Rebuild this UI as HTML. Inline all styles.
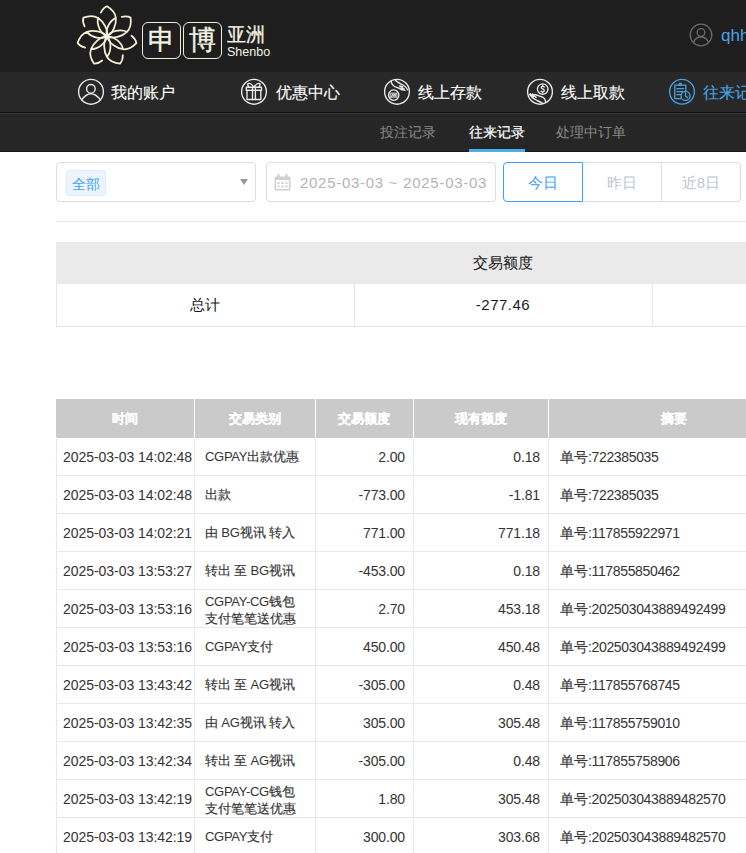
<!DOCTYPE html><html><head><meta charset="utf-8"><style>
*{margin:0;padding:0;box-sizing:border-box}
html,body{width:746px;height:853px;overflow:hidden;background:#fff;font-family:"Liberation Sans",sans-serif}
.abs{position:absolute}
b.c{font-weight:normal;letter-spacing:0;-webkit-text-stroke:0.15px currentColor}
.nv{position:absolute;top:72px;height:40px;line-height:42px;color:#fff;font-size:16px;white-space:nowrap;-webkit-text-stroke:0.1px currentColor}
.sb{position:absolute;top:113px;height:39px;line-height:38px;font-size:14px;color:#8a8a8a;white-space:nowrap}
.box{position:absolute;border:1px solid #dcdcdc;border-radius:4px;background:#fff}
.btn{position:absolute;top:162px;height:40px;border:1px solid #dcdcdc;line-height:39px;text-align:center;font-size:15px;color:#c0c4cc}
.cell{position:absolute;white-space:nowrap;font-size:14px;color:#333;line-height:20px}
.hd{position:absolute;top:399px;height:38px;line-height:40px;color:#fff;font-size:13px;font-weight:bold;text-align:center;-webkit-text-stroke:0.2px #fff}
</style></head><body>
<div class="abs" style="left:0;top:0;width:746px;height:72px;background:#1e1e1e"></div>
<div class="abs" style="left:0;top:72px;width:746px;height:40px;background:#282828"></div>
<div class="abs" style="left:0;top:112px;width:746px;height:1px;background:#121212"></div>
<div class="abs" style="left:0;top:113px;width:746px;height:1px;background:#333"></div>
<div class="abs" style="left:0;top:114px;width:746px;height:37px;background:#262626"></div>
<div class="abs" style="left:0;top:151px;width:746px;height:1px;background:#191919"></div>
<svg class="abs" style="left:70px;top:0" width="75" height="72" viewBox="-37 -36.4 75 72"><g fill="none" stroke="#f2f0d2" stroke-width="1.75" stroke-linecap="round" stroke-linejoin="round"><g transform="rotate(-15.70)"><path d="M0,0 C5,4.5 15,4 20.5,1 C24,-1 27,-6 27.8,-11.7 C26,-13.5 23,-14.8 19.5,-14.9 M0,0 C5,-4.2 15,-4 20.5,1"/></g><g transform="rotate(-67.13)"><path d="M0,0 C5,4.5 15,4 20.5,1 C24,-1 27,-6 27.8,-11.7 C26,-13.5 23,-14.8 19.5,-14.9 M0,0 C5,-4.2 15,-4 20.5,1"/></g><g transform="rotate(-118.56)"><path d="M0,0 C5,4.5 15,4 20.5,1 C24,-1 27,-6 27.8,-11.7 C26,-13.5 23,-14.8 19.5,-14.9 M0,0 C5,-4.2 15,-4 20.5,1"/></g><g transform="rotate(-169.99)"><path d="M0,0 C5,4.5 15,4 20.5,1 C24,-1 27,-6 27.8,-11.7 C26,-13.5 23,-14.8 19.5,-14.9 M0,0 C5,-4.2 15,-4 20.5,1"/></g><g transform="rotate(-221.41)"><path d="M0,0 C5,4.5 15,4 20.5,1 C24,-1 27,-6 27.8,-11.7 C26,-13.5 23,-14.8 19.5,-14.9 M0,0 C5,-4.2 15,-4 20.5,1"/></g><g transform="rotate(-272.84)"><path d="M0,0 C5,4.5 15,4 20.5,1 C24,-1 27,-6 27.8,-11.7 C26,-13.5 23,-14.8 19.5,-14.9 M0,0 C5,-4.2 15,-4 20.5,1"/></g><g transform="rotate(-324.27)"><path d="M0,0 C5,4.5 15,4 20.5,1 C24,-1 27,-6 27.8,-11.7 C26,-13.5 23,-14.8 19.5,-14.9 M0,0 C5,-4.2 15,-4 20.5,1"/></g></g><circle cx="0" cy="0" r="2.3" fill="#efefec"/></svg>
<div class="abs" style="left:142px;top:22px;width:39px;height:37px;border:1.5px solid #eeecd6;border-radius:6px;color:#f4f2e2;font-size:26.5px;line-height:35px;text-align:center;-webkit-text-stroke:0.4px #f4f2e2">申</div>
<div class="abs" style="left:183px;top:22px;width:39px;height:37px;border:1.5px solid #eeecd6;border-radius:6px;color:#f4f2e2;font-size:26.5px;line-height:35px;text-align:center;-webkit-text-stroke:0.4px #f4f2e2">博</div>
<div class="abs" style="left:227px;top:25px;font-size:19px;line-height:20px;color:#f4f2e2;-webkit-text-stroke:0.3px #f4f2e2">亚洲</div>
<div class="abs" style="left:227px;top:45px;font-size:12.5px;line-height:15px;color:#f4f2e2">Shenbo</div>
<svg class="abs" style="left:689px;top:23px" width="24" height="24" viewBox="0 0 24 24"><g fill="none" stroke="#6a6a6a" stroke-width="1.3"><circle cx="12" cy="12" r="10.8"/><circle cx="12" cy="9.5" r="3.8"/><path d="M4.5 19.5 C6 15.5 9 14 12 14 C15 14 18 15.5 19.5 19.5"/></g></svg>
<div class="abs" style="left:721px;top:24px;font-size:17px;line-height:24px;color:#4aa3e0">qhh</div>
<svg class="abs" style="left:76px;top:77px" width="30" height="30" viewBox="0 0 30 30"><g fill="none" stroke="#ececec" stroke-width="1.35" stroke-linecap="round" stroke-linejoin="round"><circle cx="15" cy="14.8" r="12.4"/><circle cx="14.9" cy="11.8" r="4.3"/><path d="M5.6,22.9 Q15,10.5 24.4,22.9"/></g></svg>
<div class="nv" style="left:111px">我的账户</div>
<svg class="abs" style="left:239px;top:77px" width="30" height="30" viewBox="0 0 30 30"><g fill="none" stroke="#ececec" stroke-width="1.35" stroke-linecap="round" stroke-linejoin="round"><circle cx="15" cy="14.8" r="12.4"/><rect x="8" y="13.4" width="13.8" height="9.1"/><rect x="7.3" y="10.2" width="15.2" height="3.2"/><path d="M13.5,10.2 V22.5 M16.4,10.2 V22.5"/><path d="M14.9,10 C13,7.5 11,5.5 9.2,6.6 C8.2,7.5 9,9 10,10 M14.9,10 C16.8,7.5 18.8,5.5 20.6,6.6 C21.6,7.5 20.8,9 19.8,10"/></g></svg>
<div class="nv" style="left:276px">优惠中心</div>
<svg class="abs" style="left:382px;top:77px" width="30" height="30" viewBox="0 0 30 30"><g fill="none" stroke="#ececec" stroke-width="1.35" stroke-linecap="round" stroke-linejoin="round"><circle cx="15" cy="14.8" r="12.4"/><circle cx="11.7" cy="18.1" r="5.2"/><path stroke-width="0.9" d="M8.5,16.2 H14.9 V20.2 H8.5 Z M9.4,19.6 L10.4,16.9 L11.2,19.6 L12.2,16.9 L13.1,19.6 L14,16.9"/><path d="M9,4 C9.5,7.5 12,10 16.5,11 C18.5,11.5 19.5,12.5 20,13 M13.3,3.3 C15.5,5.5 18,6.5 21,8 C23.5,9.5 25,11.5 25.5,12.8"/><path d="M17.6,9 L20.8,9.9 M19,10.8 L22,11.8 M20.5,12.5 L23,13.3"/></g></svg>
<div class="nv" style="left:418px">线上存款</div>
<svg class="abs" style="left:525px;top:77px" width="30" height="30" viewBox="0 0 30 30"><g fill="none" stroke="#ececec" stroke-width="1.35" stroke-linecap="round" stroke-linejoin="round"><circle cx="15" cy="14.8" r="12.4"/><circle cx="17.7" cy="12.1" r="5.3"/><path d="M19.2,10 C18.8,9 16.2,9 16.2,10.6 C16.2,12.2 19.3,11.8 19.3,13.6 C19.3,15.2 16.6,15.2 16,14.2 M17.7,8.2 V9 M17.7,15.2 V16"/><path d="M4.6,17.5 C6.5,20 8.5,22 12,23.5 C14.5,24.5 16.5,25.5 17.8,26.3 M9.8,17.4 C12.5,18.5 15,19 17.5,20 C19.5,21 20.5,23 20.7,25.3 M5.3,16.7 L8.5,19.5 M7.5,17 L11.2,20.6"/></g></svg>
<div class="nv" style="left:561px">线上取款</div>
<svg class="abs" style="left:667px;top:77px" width="30" height="30" viewBox="0 0 30 30"><g fill="none" stroke="#4aa3e0" stroke-width="1.3" stroke-linecap="round" stroke-linejoin="round"><circle cx="15" cy="14.8" r="12.4"/><path d="M14,21.6 H7.8 V8.2 H18.8 V14.2"/><circle cx="13.3" cy="7.3" r="1.2"/><path d="M10,11.7 H16.6 M10,14.6 H16 M10,17.7 H13.5"/><circle cx="18.5" cy="18.9" r="4.5"/><path d="M18.5,16 V19.2 L20.5,20.6"/></g></svg>
<div class="nv" style="left:703px;color:#4aa3e0">往来记录</div>
<div class="sb" style="left:380px">投注记录</div>
<div class="sb" style="left:469px;color:#fff;-webkit-text-stroke:0.2px #fff">往来记录</div>
<div class="abs" style="left:469px;top:149px;width:56px;height:3px;background:#4aaeea"></div>
<div class="sb" style="left:556px">处理中订单</div>
<div class="box" style="left:56px;top:162px;width:200px;height:40px"></div>
<div class="abs" style="left:66px;top:170px;width:40px;height:26px;background:#ecf5ff;border:1px solid #d9ecff;border-radius:3px;color:#409eff;font-size:14px;line-height:27px;text-align:center">全部</div>
<div class="abs" style="left:240px;top:179px;width:0;height:0;border-left:4px solid transparent;border-right:4px solid transparent;border-top:6px solid #999"></div>
<div class="box" style="left:266px;top:162px;width:230px;height:40px"></div>
<svg class="abs" style="left:274px;top:174px" width="17" height="17" viewBox="0 0 17 17"><rect x="0.5" y="2.5" width="16" height="14" rx="1.5" fill="#d0d0d0"/><rect x="2" y="6" width="13" height="9" fill="#fff"/><rect x="3.5" y="0" width="2" height="4" fill="#d0d0d0"/><rect x="11.5" y="0" width="2" height="4" fill="#d0d0d0"/><g fill="#d0d0d0"><rect x="3.5" y="8" width="2" height="2"/><rect x="7.5" y="8" width="2" height="2"/><rect x="11.5" y="8" width="2" height="2"/><rect x="3.5" y="11.5" width="2" height="2"/><rect x="7.5" y="11.5" width="2" height="2"/><rect x="11.5" y="11.5" width="2" height="2"/></g></svg>
<div class="abs" style="left:300px;top:162px;line-height:41px;font-size:15px;letter-spacing:0.72px;color:#b4b4b4;white-space:nowrap">2025-03-03 ~ 2025-03-03</div>
<div class="btn" style="left:503px;width:80px;border-color:#409eff;color:#409eff;border-radius:4px 0 0 4px;z-index:2">今日</div>
<div class="btn" style="left:582px;width:80px;border-left:none">昨日</div>
<div class="btn" style="left:661px;width:80px;border-radius:0 4px 4px 0">近8日</div>
<div class="abs" style="left:56px;top:221px;width:690px;height:1px;background:#e8e8e8"></div>
<div class="abs" style="left:56px;top:242px;width:690px;height:42px;background:#eaeaea"></div>
<div class="abs" style="left:56px;top:284px;width:720px;height:43px;border:1px solid #e6e6e6;border-top:none"></div>
<div class="abs" style="left:354px;top:284px;width:1px;height:42px;background:#e6e6e6"></div>
<div class="abs" style="left:652px;top:284px;width:1px;height:42px;background:#e6e6e6"></div>
<div class="cell" style="left:354px;width:298px;top:253px;text-align:center;font-size:15px;color:#1a1a1a;-webkit-text-stroke:0.05px #1a1a1a">交易额度</div>
<div class="cell" style="left:56px;width:298px;top:295px;text-align:center;font-size:15px;color:#1a1a1a;-webkit-text-stroke:0.05px #1a1a1a">总计</div>
<div class="cell" style="left:354px;width:298px;top:295px;text-align:center;font-size:15px;letter-spacing:0.5px;color:#1a1a1a">-277.46</div>
<div class="abs" style="left:56px;top:399px;width:744px;height:39px;background:#cacaca"></div>
<div class="hd" style="left:56px;width:138px">时间</div>
<div class="abs" style="left:194px;top:399px;width:1px;height:39px;background:#fff"></div>
<div class="hd" style="left:194px;width:121px">交易类别</div>
<div class="abs" style="left:315px;top:399px;width:1px;height:39px;background:#fff"></div>
<div class="hd" style="left:315px;width:98px">交易额度</div>
<div class="abs" style="left:413px;top:399px;width:1px;height:39px;background:#fff"></div>
<div class="hd" style="left:413px;width:135px">现有额度</div>
<div class="abs" style="left:548px;top:399px;width:1px;height:39px;background:#fff"></div>
<div class="hd" style="left:548px;width:252px">摘要</div>
<div class="abs" style="left:56px;top:475px;width:744px;height:1px;background:#e8e8e8"></div>
<div class="abs" style="left:56px;top:513px;width:744px;height:1px;background:#e8e8e8"></div>
<div class="abs" style="left:56px;top:551px;width:744px;height:1px;background:#e8e8e8"></div>
<div class="abs" style="left:56px;top:589px;width:744px;height:1px;background:#e8e8e8"></div>
<div class="abs" style="left:56px;top:627px;width:744px;height:1px;background:#e8e8e8"></div>
<div class="abs" style="left:56px;top:665px;width:744px;height:1px;background:#e8e8e8"></div>
<div class="abs" style="left:56px;top:703px;width:744px;height:1px;background:#e8e8e8"></div>
<div class="abs" style="left:56px;top:741px;width:744px;height:1px;background:#e8e8e8"></div>
<div class="abs" style="left:56px;top:779px;width:744px;height:1px;background:#e8e8e8"></div>
<div class="abs" style="left:56px;top:817px;width:744px;height:1px;background:#e8e8e8"></div>
<div class="abs" style="left:56px;top:855px;width:744px;height:1px;background:#e8e8e8"></div>
<div class="abs" style="left:56px;top:437px;width:1px;height:419px;background:#e8e8e8"></div>
<div class="abs" style="left:194px;top:437px;width:1px;height:419px;background:#e8e8e8"></div>
<div class="abs" style="left:315px;top:437px;width:1px;height:419px;background:#e8e8e8"></div>
<div class="abs" style="left:413px;top:437px;width:1px;height:419px;background:#e8e8e8"></div>
<div class="abs" style="left:548px;top:437px;width:1px;height:419px;background:#e8e8e8"></div>
<div class="cell" style="left:63px;top:447px;letter-spacing:-0.05px">2025-03-03 14:02:48</div>
<div class="cell" style="left:205px;top:447px;font-size:13px;letter-spacing:-0.3px">CGPAY<b class="c" style="font-size:13px">出款优惠</b></div>
<div class="cell" style="left:315px;width:90px;top:447px;text-align:right;letter-spacing:-0.15px">2.00</div>
<div class="cell" style="left:413px;width:127px;top:447px;text-align:right;letter-spacing:-0.15px">0.18</div>
<div class="cell" style="left:560px;top:447px;letter-spacing:-0.35px"><b class="c" style="font-size:13.5px">单号</b>:722385035</div>
<div class="cell" style="left:63px;top:485px;letter-spacing:-0.05px">2025-03-03 14:02:48</div>
<div class="cell" style="left:205px;top:485px;font-size:13px;letter-spacing:-0.3px"><b class="c" style="font-size:13px">出款</b></div>
<div class="cell" style="left:315px;width:90px;top:485px;text-align:right;letter-spacing:-0.15px">-773.00</div>
<div class="cell" style="left:413px;width:127px;top:485px;text-align:right;letter-spacing:-0.15px">-1.81</div>
<div class="cell" style="left:560px;top:485px;letter-spacing:-0.35px"><b class="c" style="font-size:13.5px">单号</b>:722385035</div>
<div class="cell" style="left:63px;top:523px;letter-spacing:-0.05px">2025-03-03 14:02:21</div>
<div class="cell" style="left:205px;top:523px;font-size:13px;letter-spacing:-0.3px"><b class="c" style="font-size:13px">由</b> BG<b class="c" style="font-size:13px">视讯</b> <b class="c" style="font-size:13px">转入</b></div>
<div class="cell" style="left:315px;width:90px;top:523px;text-align:right;letter-spacing:-0.15px">771.00</div>
<div class="cell" style="left:413px;width:127px;top:523px;text-align:right;letter-spacing:-0.15px">771.18</div>
<div class="cell" style="left:560px;top:523px;letter-spacing:-0.35px"><b class="c" style="font-size:13.5px">单号</b>:117855922971</div>
<div class="cell" style="left:63px;top:561px;letter-spacing:-0.05px">2025-03-03 13:53:27</div>
<div class="cell" style="left:205px;top:561px;font-size:13px;letter-spacing:-0.3px"><b class="c" style="font-size:13px">转出</b> <b class="c" style="font-size:13px">至</b> BG<b class="c" style="font-size:13px">视讯</b></div>
<div class="cell" style="left:315px;width:90px;top:561px;text-align:right;letter-spacing:-0.15px">-453.00</div>
<div class="cell" style="left:413px;width:127px;top:561px;text-align:right;letter-spacing:-0.15px">0.18</div>
<div class="cell" style="left:560px;top:561px;letter-spacing:-0.35px"><b class="c" style="font-size:13.5px">单号</b>:117855850462</div>
<div class="cell" style="left:63px;top:599px;letter-spacing:-0.05px">2025-03-03 13:53:16</div>
<div class="cell" style="left:205px;top:592.5px;line-height:17px;font-size:13px;letter-spacing:-0.3px">CGPAY-CG<b class="c" style="font-size:13px">钱包</b><br><b class="c" style="font-size:13px">支付笔笔送优惠</b></div>
<div class="cell" style="left:315px;width:90px;top:599px;text-align:right;letter-spacing:-0.15px">2.70</div>
<div class="cell" style="left:413px;width:127px;top:599px;text-align:right;letter-spacing:-0.15px">453.18</div>
<div class="cell" style="left:560px;top:599px;letter-spacing:-0.35px"><b class="c" style="font-size:13.5px">单号</b>:202503043889492499</div>
<div class="cell" style="left:63px;top:637px;letter-spacing:-0.05px">2025-03-03 13:53:16</div>
<div class="cell" style="left:205px;top:637px;font-size:13px;letter-spacing:-0.3px">CGPAY<b class="c" style="font-size:13px">支付</b></div>
<div class="cell" style="left:315px;width:90px;top:637px;text-align:right;letter-spacing:-0.15px">450.00</div>
<div class="cell" style="left:413px;width:127px;top:637px;text-align:right;letter-spacing:-0.15px">450.48</div>
<div class="cell" style="left:560px;top:637px;letter-spacing:-0.35px"><b class="c" style="font-size:13.5px">单号</b>:202503043889492499</div>
<div class="cell" style="left:63px;top:675px;letter-spacing:-0.05px">2025-03-03 13:43:42</div>
<div class="cell" style="left:205px;top:675px;font-size:13px;letter-spacing:-0.3px"><b class="c" style="font-size:13px">转出</b> <b class="c" style="font-size:13px">至</b> AG<b class="c" style="font-size:13px">视讯</b></div>
<div class="cell" style="left:315px;width:90px;top:675px;text-align:right;letter-spacing:-0.15px">-305.00</div>
<div class="cell" style="left:413px;width:127px;top:675px;text-align:right;letter-spacing:-0.15px">0.48</div>
<div class="cell" style="left:560px;top:675px;letter-spacing:-0.35px"><b class="c" style="font-size:13.5px">单号</b>:117855768745</div>
<div class="cell" style="left:63px;top:713px;letter-spacing:-0.05px">2025-03-03 13:42:35</div>
<div class="cell" style="left:205px;top:713px;font-size:13px;letter-spacing:-0.3px"><b class="c" style="font-size:13px">由</b> AG<b class="c" style="font-size:13px">视讯</b> <b class="c" style="font-size:13px">转入</b></div>
<div class="cell" style="left:315px;width:90px;top:713px;text-align:right;letter-spacing:-0.15px">305.00</div>
<div class="cell" style="left:413px;width:127px;top:713px;text-align:right;letter-spacing:-0.15px">305.48</div>
<div class="cell" style="left:560px;top:713px;letter-spacing:-0.35px"><b class="c" style="font-size:13.5px">单号</b>:117855759010</div>
<div class="cell" style="left:63px;top:751px;letter-spacing:-0.05px">2025-03-03 13:42:34</div>
<div class="cell" style="left:205px;top:751px;font-size:13px;letter-spacing:-0.3px"><b class="c" style="font-size:13px">转出</b> <b class="c" style="font-size:13px">至</b> AG<b class="c" style="font-size:13px">视讯</b></div>
<div class="cell" style="left:315px;width:90px;top:751px;text-align:right;letter-spacing:-0.15px">-305.00</div>
<div class="cell" style="left:413px;width:127px;top:751px;text-align:right;letter-spacing:-0.15px">0.48</div>
<div class="cell" style="left:560px;top:751px;letter-spacing:-0.35px"><b class="c" style="font-size:13.5px">单号</b>:117855758906</div>
<div class="cell" style="left:63px;top:789px;letter-spacing:-0.05px">2025-03-03 13:42:19</div>
<div class="cell" style="left:205px;top:782.5px;line-height:17px;font-size:13px;letter-spacing:-0.3px">CGPAY-CG<b class="c" style="font-size:13px">钱包</b><br><b class="c" style="font-size:13px">支付笔笔送优惠</b></div>
<div class="cell" style="left:315px;width:90px;top:789px;text-align:right;letter-spacing:-0.15px">1.80</div>
<div class="cell" style="left:413px;width:127px;top:789px;text-align:right;letter-spacing:-0.15px">305.48</div>
<div class="cell" style="left:560px;top:789px;letter-spacing:-0.35px"><b class="c" style="font-size:13.5px">单号</b>:202503043889482570</div>
<div class="cell" style="left:63px;top:827px;letter-spacing:-0.05px">2025-03-03 13:42:19</div>
<div class="cell" style="left:205px;top:827px;font-size:13px;letter-spacing:-0.3px">CGPAY<b class="c" style="font-size:13px">支付</b></div>
<div class="cell" style="left:315px;width:90px;top:827px;text-align:right;letter-spacing:-0.15px">300.00</div>
<div class="cell" style="left:413px;width:127px;top:827px;text-align:right;letter-spacing:-0.15px">303.68</div>
<div class="cell" style="left:560px;top:827px;letter-spacing:-0.35px"><b class="c" style="font-size:13.5px">单号</b>:202503043889482570</div>
</body></html>
